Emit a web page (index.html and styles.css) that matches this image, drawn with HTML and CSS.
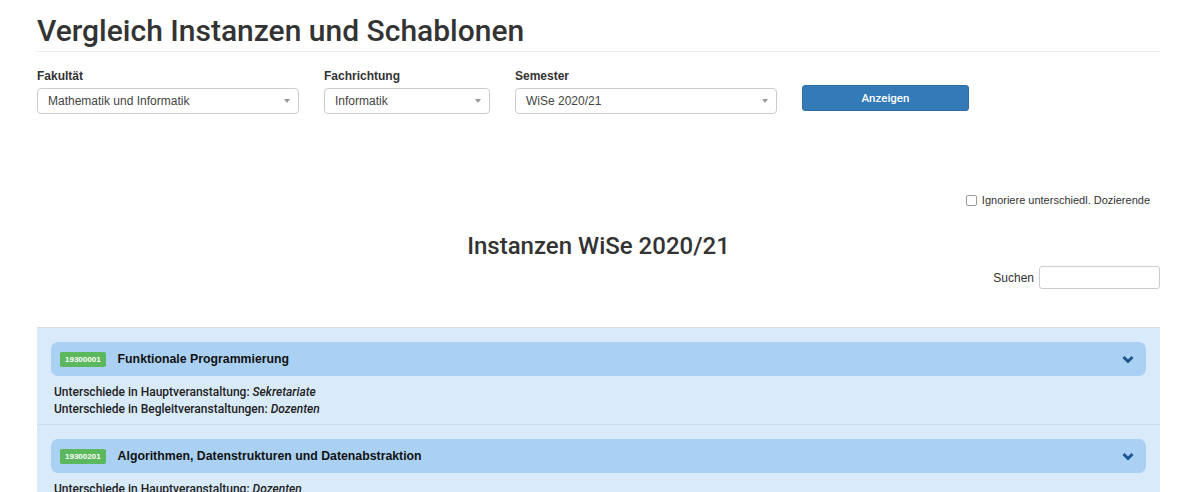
FILE: index.html
```html
<!DOCTYPE html>
<html lang="de">
<head>
    <meta charset="UTF-8">
    <title>Vergleich Instanzen und Schablonen</title>
    <link rel="stylesheet" href="styles.css">
</head>
<body>
<div class="container">
    <h1 class="page-title">Vergleich Instanzen und Schablonen</h1>

    <form class="filter-row">
        <div class="field field-wide">
            <label>Fakultät</label>
            <div class="select-box"><span>Mathematik und Informatik</span><b class="caret"></b></div>
        </div>
        <div class="field field-narrow">
            <label>Fachrichtung</label>
            <div class="select-box"><span>Informatik</span><b class="caret"></b></div>
        </div>
        <div class="field field-wide">
            <label>Semester</label>
            <div class="select-box"><span>WiSe 2020/21</span><b class="caret"></b></div>
        </div>
        <button type="button" class="btn-primary">Anzeigen</button>
    </form>

    <div class="options-row">
        <label class="check"><span class="checkbox"></span>Ignoriere unterschiedl. Dozierende</label>
    </div>

    <h2 class="section-title">Instanzen WiSe 2020/21</h2>

    <div class="search-row">
        <label>Suchen</label>
        <span class="search-input"></span>
    </div>

    <div class="course-list">
        <div class="course">
            <div class="course-head">
                <span class="badge">19300001</span>
                <span class="course-name">Funktionale Programmierung</span>
                <svg class="chevron" width="12" height="9" viewBox="0 0 12 9"><polyline points="1.5,2 6,6.5 10.5,2" fill="none" stroke="#1d5590" stroke-width="3"/></svg>
            </div>
            <div class="course-info">
                <div>Unterschiede in Hauptveranstaltung: <em>Sekretariate</em></div>
                <div>Unterschiede in Begleitveranstaltungen: <em>Dozenten</em></div>
            </div>
        </div>
        <div class="course">
            <div class="course-head">
                <span class="badge">19300201</span>
                <span class="course-name">Algorithmen, Datenstrukturen und Datenabstraktion</span>
                <svg class="chevron" width="12" height="9" viewBox="0 0 12 9"><polyline points="1.5,2 6,6.5 10.5,2" fill="none" stroke="#1d5590" stroke-width="3"/></svg>
            </div>
            <div class="course-info">
                <div>Unterschiede in Hauptveranstaltung: <em>Dozenten</em></div>
                <div>Unterschiede in Begleitveranstaltungen: <em>Dozenten</em></div>
            </div>
        </div>
    </div>
</div>
</body>
</html>
```

FILE: styles.css
```css
body {
    margin: 0;
    font-family: "Liberation Sans", Arial, sans-serif;
    font-size: 12px;
    color: #333;
    background: #fff;
}
.container {
    width: 1123px;
    margin-left: 37px;
}
.page-title {
    font-family: Roboto, "Liberation Sans", sans-serif;
    font-size: 30px;
    font-weight: 500;
    line-height: 33px;
    margin: 14px 0 0;
    padding-bottom: 4px;
    border-bottom: 1px solid #eee;
}
.filter-row {
    display: flex;
    gap: 25px;
    margin-top: 17px;
}
.field label {
    display: block;
    font-weight: bold;
    line-height: 14px;
    margin-bottom: 5px;
}
.field-wide {
    width: 262px;
}
.field-narrow {
    width: 166px;
}
.select-box {
    position: relative;
    height: 24px;
    border: 1px solid #ccc;
    border-radius: 4px;
    line-height: 25px;
    padding-left: 10px;
    color: #444;
}
.caret {
    position: absolute;
    right: 8px;
    top: 10px;
    border-top: 4px solid #999;
    border-left: 3px solid transparent;
    border-right: 3px solid transparent;
}
.btn-primary {
    align-self: flex-start;
    margin-top: 16px;
    width: 167px;
    height: 26px;
    background: #337ab7;
    border: 1px solid #2e6da4;
    border-radius: 3px;
    color: #fff;
    font-family: Roboto, "Liberation Sans", sans-serif;
    font-weight: 500;
    font-size: 11.5px;
}
.options-row {
    display: flex;
    justify-content: flex-end;
    margin-top: 79px;
    padding-right: 10px;
}
.check {
    display: flex;
    align-items: center;
    font-size: 11px;
    line-height: 14px;
}
.checkbox {
    width: 9px;
    height: 9px;
    border: 1px solid #999;
    border-radius: 2px;
    margin-right: 5px;
}
.section-title {
    font-family: Roboto, "Liberation Sans", sans-serif;
    text-align: center;
    font-size: 24px;
    font-weight: 500;
    line-height: 26px;
    margin: 26px 0 0;
}
.search-row {
    display: flex;
    justify-content: flex-end;
    align-items: center;
    gap: 5px;
    margin-top: 7px;
}
.search-input {
    width: 119px;
    height: 21px;
    border: 1px solid #ccc;
    border-radius: 3px;
}
.course-list {
    margin-top: 38px;
    background: #d9eafa;
    border-top: 1px solid #ddd;
}
.course {
    padding: 14px 14px 6px;
    border-bottom: 1px solid #d0dde8;
}
.course-head {
    display: flex;
    align-items: center;
    height: 34px;
    padding: 0 9px;
    background: #aad1f4;
    border-radius: 7px;
}
.badge {
    background: #5cb85c;
    color: #fff;
    font-size: 8px;
    font-weight: bold;
    line-height: 15px;
    padding: 0 5px;
    border-radius: 2px;
    margin-right: 12px;
}
.course-name {
    flex: 1;
    font-size: 12.3px;
    font-weight: bold;
    color: #111;
}
.chevron {
    margin-right: 3px;
}
.course-info {
    padding: 8px 3px 0;
    line-height: 17px;
    font-family: Roboto, "Liberation Sans", sans-serif;
    font-weight: 500;
    font-size: 12px;
    color: #222;
}
.course-info em {
    font-weight: 500;
}
```
